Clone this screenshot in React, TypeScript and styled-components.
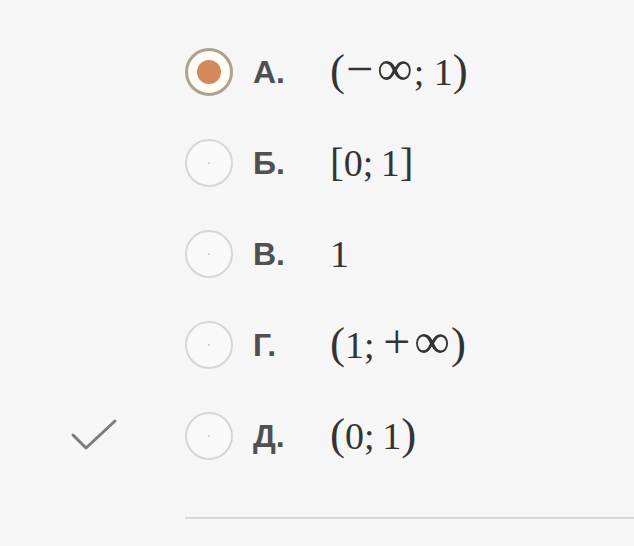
import { createGlobalStyle, styled } from "styled-components"

const Global = createGlobalStyle`
  html, body {
    margin: 0;
    padding: 0;
    background: #f6f6f6;
  }
`

const Page = styled.div`
  width: 634px;
  height: 546px;
  background: #f6f6f6;
  padding-top: 26px;
  box-sizing: border-box;
  overflow: hidden;
`

const List = styled.div`
  display: flex;
  flex-direction: column;
`

const Row = styled.div`
  display: grid;
  grid-template-columns: 185px 48px 97px 1fr;
  align-items: center;
  height: 91px;
`

const Mark = styled.div`
  display: flex;
  align-items: center;
  padding-left: 70px;
  padding-top: 2px;
`

const Radio = styled.div<{ $checked?: boolean }>`
  width: 48px;
  height: 48px;
  box-sizing: border-box;
  border-radius: 50%;
  border: ${(p) => (p.$checked ? "3px solid #aca28f" : "2px solid #d6d6d6")};
  background: ${(p) => (p.$checked ? "#fffcf6" : "#f9f9f9")};
  display: flex;
  align-items: center;
  justify-content: center;

  &::after {
    content: "";
    width: ${(p) => (p.$checked ? "24px" : "2px")};
    height: ${(p) => (p.$checked ? "24px" : "2px")};
    border-radius: 50%;
    background: ${(p) => (p.$checked ? "#d3895a" : "#c8c8c8")};
  }
`

const Label = styled.span`
  padding-left: 20px;
  padding-top: 2px;
  font-family: "Liberation Sans", Arial, sans-serif;
  font-weight: 700;
  font-size: 32px;
  color: #505050;
`

const Math = styled.span`
  display: inline-flex;
  align-items: baseline;
  font-family: "Liberation Serif", "Times New Roman", serif;
  font-size: 38px;
  color: #333;
  white-space: pre;
`

const Paren = styled.span<{ $square?: boolean }>`
  font-size: ${(p) => (p.$square ? "41px" : "45px")};
  line-height: 0;
`

const Op = styled.span<{ $wide?: boolean }>`
  font-size: ${(p) => (p.$wide ? "50px" : "48px")};
  line-height: 0;
  margin: ${(p) => (p.$wide ? "0 1px 0 3px" : "0 1px")};
`

const Divider = styled.div`
  margin-top: 36px;
  margin-left: 185px;
  border-top: 2px solid #d8d8d8;
`

function Check() {
  return (
    <svg width="48" height="40" viewBox="0 0 48 40">
      <polyline
        points="3,18 16,31 45,4"
        fill="none"
        stroke="#7c7c7c"
        strokeWidth="3"
        strokeLinecap="round"
        strokeLinejoin="round"
      />
    </svg>
  )
}

type Option = {
  letter: string
  math: React.ReactNode
  checked?: boolean
  correct?: boolean
}

const options: Option[] = [
  {
    letter: "А.",
    checked: true,
    math: (
      <>
        <Paren>(</Paren>
        <Op>−</Op>
        <Op $wide>∞</Op>; 1<Paren>)</Paren>
      </>
    ),
  },
  {
    letter: "Б.",
    math: (
      <>
        <Paren $square>[</Paren>0;{"\u2009"}1<Paren $square>]</Paren>
      </>
    ),
  },
  { letter: "В.", math: <>1</> },
  {
    letter: "Г.",
    math: (
      <>
        <Paren>(</Paren>1;{"\u2009"}<Op>+</Op>
        <Op $wide>∞</Op>
        <Paren>)</Paren>
      </>
    ),
  },
  {
    letter: "Д.",
    correct: true,
    math: (
      <>
        <Paren>(</Paren>0;{"\u2009"}1<Paren>)</Paren>
      </>
    ),
  },
]

function App() {
  return (
    <Page>
      <Global />
      <List>
        {options.map((o) => (
          <Row key={o.letter}>
            <Mark>{o.correct && <Check />}</Mark>
            <Radio $checked={o.checked} />
            <Label>{o.letter}</Label>
            <Math>{o.math}</Math>
          </Row>
        ))}
      </List>
      <Divider />
    </Page>
  )
}

export default App
